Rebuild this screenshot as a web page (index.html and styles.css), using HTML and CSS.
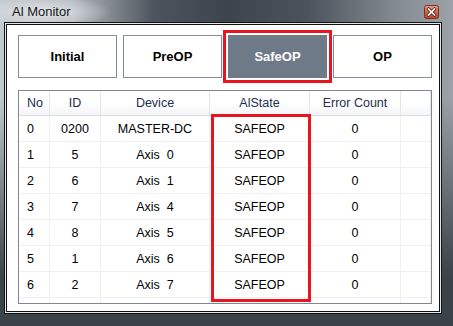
FILE: index.html
```html
<!DOCTYPE html>
<html lang="en">
<head>
  <meta charset="UTF-8">
  <title>AI Monitor</title>
  <link rel="stylesheet" href="styles.css">
</head>
<body>

  <div class="window">
    <!-- Title bar -->
    <div class="titlebar">
      <span class="title">Al Monitor</span>
      <span class="close-btn">
        <svg width="15" height="14" viewBox="0 0 15 14">
          <defs>
            <linearGradient id="closeFill" x1="0" y1="0" x2="0" y2="1">
              <stop offset="0" stop-color="#eaa590"/>
              <stop offset="0.45" stop-color="#d86a4f"/>
              <stop offset="1" stop-color="#c2442c"/>
            </linearGradient>
          </defs>
          <rect x="0.5" y="0.5" width="14" height="13" rx="2" fill="url(#closeFill)" stroke="#7a2f20"/>
          <path d="M4.5 4 L10.5 10 M10.5 4 L4.5 10" stroke="#5a2418" stroke-width="3.2" stroke-linecap="square"/>
          <path d="M4.5 4 L10.5 10 M10.5 4 L4.5 10" stroke="#ffffff" stroke-width="1.6" stroke-linecap="square"/>
        </svg>
      </span>
    </div>

    <div class="client">
      <!-- State buttons -->
      <div class="states">
        <div class="state-btn">Initial</div>
        <div class="state-btn">PreOP</div>
        <div class="state-btn active">SafeOP</div>
        <div class="state-btn">OP</div>
      </div>

      <!-- Slave list -->
      <div class="list">
        <div class="list-row list-head">
          <div class="cell cell-no">No</div>
          <div class="cell">ID</div>
          <div class="cell">Device</div>
          <div class="cell">AlState</div>
          <div class="cell">Error Count</div>
          <div class="cell"></div>
        </div>
        <div class="list-row">
          <div class="cell cell-no">0</div><div class="cell">0200</div><div class="cell">MASTER-DC</div><div class="cell">SAFEOP</div><div class="cell">0</div><div class="cell"></div>
        </div>
        <div class="list-row">
          <div class="cell cell-no">1</div><div class="cell">5</div><div class="cell">Axis&nbsp;&nbsp;0</div><div class="cell">SAFEOP</div><div class="cell">0</div><div class="cell"></div>
        </div>
        <div class="list-row">
          <div class="cell cell-no">2</div><div class="cell">6</div><div class="cell">Axis&nbsp;&nbsp;1</div><div class="cell">SAFEOP</div><div class="cell">0</div><div class="cell"></div>
        </div>
        <div class="list-row">
          <div class="cell cell-no">3</div><div class="cell">7</div><div class="cell">Axis&nbsp;&nbsp;4</div><div class="cell">SAFEOP</div><div class="cell">0</div><div class="cell"></div>
        </div>
        <div class="list-row">
          <div class="cell cell-no">4</div><div class="cell">8</div><div class="cell">Axis&nbsp;&nbsp;5</div><div class="cell">SAFEOP</div><div class="cell">0</div><div class="cell"></div>
        </div>
        <div class="list-row">
          <div class="cell cell-no">5</div><div class="cell">1</div><div class="cell">Axis&nbsp;&nbsp;6</div><div class="cell">SAFEOP</div><div class="cell">0</div><div class="cell"></div>
        </div>
        <div class="list-row">
          <div class="cell cell-no">6</div><div class="cell">2</div><div class="cell">Axis&nbsp;&nbsp;7</div><div class="cell">SAFEOP</div><div class="cell">0</div><div class="cell"></div>
        </div>
        <div class="list-row list-filler">
          <div class="cell"></div><div class="cell"></div><div class="cell"></div><div class="cell"></div><div class="cell"></div><div class="cell"></div>
        </div>

        <!-- Highlight around the AlState column -->
        <div class="state-mark"></div>
      </div>
    </div>
  </div>

</body>
</html>
```

FILE: styles.css
```css
body {
  margin: 0;
  background: #ffffff;
}
.window {
  width: 453px;
  height: 326px;
  box-sizing: border-box;
  padding: 0 13px 14px 6px;
  background:
    radial-gradient(ellipse 70px 16px at 42px 12px, rgba(226, 229, 232, 1), rgba(226, 229, 232, 0)),
    linear-gradient(180deg, rgba(58, 66, 74, 0) 0, rgba(58, 66, 74, 0) 30%, rgba(58, 66, 74, 1) 85%),
    linear-gradient(90deg, #c3c8cd 0, #b2b8be 16%, #4c545d 34%, #3c444d 50%, #4b545d 68%, #858c93 88%, #9ca2a8 100%);
}
.titlebar {
  height: 24px;
  display: flex;
  align-items: flex-start;
  justify-content: space-between;
  box-sizing: border-box;
  padding: 4px 1px 0 6px;
}
.title {
  font-family: "Liberation Sans", Arial, sans-serif;
  font-size: 13px;
  color: #161616;
  line-height: 16px;
}
.close-btn {
  display: block;
  height: 14px;
  margin-top: 1px;
}
.close-btn svg {
  display: block;
}
.client {
  width: 434px;
  height: 288px;
  box-sizing: border-box;
  border: 1px solid #121212;
  box-shadow: 0 0 0 1px #e4e7ea, 0 0 0 2px #121212;
  background: #ffffff;
  padding: 10px 7px 0 11px;
}
.states {
  display: grid;
  grid-template-columns: repeat(4, 99px);
  gap: 6px;
  height: 43px;
}
.state-btn {
  border: 1px solid #868d97;
  display: flex;
  align-items: center;
  justify-content: center;
  font-family: "Liberation Sans", Arial, sans-serif;
  font-weight: bold;
  font-size: 13px;
  color: #000000;
}
.state-btn.active {
  background: #6f7a88;
  border-color: #6f7a88;
  color: #ffffff;
  outline: 3px solid #e8141e;
  outline-offset: 2px;
}
.list {
  position: relative;
  margin-top: 12px;
  width: 414px;
  height: 214px;
  box-sizing: border-box;
  border: 1px solid #82878f;
  overflow: hidden;
  font-family: "Liberation Sans", Arial, sans-serif;
  font-size: 12.5px;
  color: #000000;
}
.list-row {
  display: grid;
  grid-template-columns: 31px 51px 109px 100px 91px 1fr;
  height: 26px;
  box-sizing: border-box;
  border-bottom: 1px solid #f0f0f0;
}
.list-head {
  height: 25px;
  border-bottom: 1px solid #d8dbe0;
  background: linear-gradient(180deg, #ffffff 0, #ffffff 45%, #f4f5f7 100%);
  color: #1d2f4d;
}
.cell {
  box-sizing: border-box;
  border-right: 1px solid #f0f0f0;
  display: flex;
  align-items: center;
  justify-content: center;
  white-space: nowrap;
}
.list-head .cell {
  border-right-color: #e2e5ea;
}
.cell-no {
  justify-content: flex-start;
  padding-left: 8px;
}
.list-filler {
  border-bottom: none;
}
.state-mark {
  position: absolute;
  left: 192px;
  top: 23px;
  width: 100px;
  height: 188px;
  box-sizing: border-box;
  border: 3px solid #e8141e;
}
```
